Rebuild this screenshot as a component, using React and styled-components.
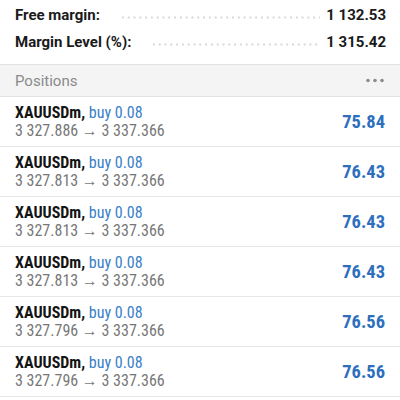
import React from "react";
import styled, { createGlobalStyle } from "styled-components";

const Global = createGlobalStyle`
  html, body { margin: 0; padding: 0; background: #ffffff; }
  body { font-family: Roboto, "Noto Sans", sans-serif; }
`;

const Page = styled.div`
  width: 400px;
  height: 400px;
  overflow: hidden;
  background: #fff;
`;

const Summary = styled.div`
  padding: 1px 14px 9px 15px;
  display: flex;
  flex-direction: column;
`;

const SummaryRow = styled.div`
  display: flex;
  align-items: center;
  height: 27px;
  font-size: 15px;
  font-weight: 700;
  color: #1a1a1a;
`;

const Label = styled.span`
  white-space: nowrap;
`;

const Leader = styled.span`
  flex: 1;
  height: 3px;
  margin: 6px 6px 0 20px;
  background-image: radial-gradient(circle, #d6d6d6 0.9px, transparent 1.3px);
  background-size: 5.8px 3px;
  background-repeat: repeat-x;
`;

const Amount = styled.span`
  white-space: nowrap;
`;

const SectionHeader = styled.div`
  display: flex;
  align-items: center;
  justify-content: space-between;
  height: 31px;
  padding: 0 16px 0 15px;
  background: #f4f4f4;
  border-top: 1px solid #e2e2e2;
  border-bottom: 1px solid #e2e2e2;
  font-size: 15px;
  color: #8a8a8a;
`;

const Position = styled.div`
  display: flex;
  align-items: center;
  justify-content: space-between;
  padding: 7px 15px 6px 15px;
  border-bottom: 1px solid #e6e6e6;
  font-family: "Roboto Condensed", Roboto, sans-serif;
`;

const Info = styled.div`
  display: flex;
  flex-direction: column;
  font-size: 16px;
  line-height: 18px;
`;

const Symbol = styled.span`
  font-weight: 700;
  color: #141414;
`;

const Side = styled.span`
  color: #3a80c8;
`;

const Prices = styled.span`
  color: #777777;
`;

const Profit = styled.span`
  font-size: 18.5px;
  font-weight: 700;
  color: #2d6fbe;
`;

const summary = [
  ["Free margin:", "1 132.53"],
  ["Margin Level (%):", "1 315.42"],
];

const positions = [
  ["3 327.886", "75.84"],
  ["3 327.813", "76.43"],
  ["3 327.813", "76.43"],
  ["3 327.813", "76.43"],
  ["3 327.796", "76.56"],
  ["3 327.796", "76.56"],
];

const MoreIcon = () => (
  <svg width="18" height="5" viewBox="0 0 18 5">
    <circle cx="2" cy="2.5" r="1.8" fill="#8c8c8c" />
    <circle cx="9" cy="2.5" r="1.8" fill="#8c8c8c" />
    <circle cx="16" cy="2.5" r="1.8" fill="#8c8c8c" />
  </svg>
);

export default function App() {
  return (
    <Page>
      <Global />
      <Summary>
        {summary.map(([l, v]) => (
          <SummaryRow key={l}>
            <Label>{l}</Label>
            <Leader />
            <Amount>{v}</Amount>
          </SummaryRow>
        ))}
      </Summary>
      <SectionHeader>
        <span>Positions</span>
        <MoreIcon />
      </SectionHeader>
      {positions.map(([open, profit], i) => (
        <Position key={i}>
          <Info>
            <span>
              <Symbol>XAUUSDm,</Symbol> <Side>buy 0.08</Side>
            </span>
            <Prices>{open} → 3 337.366</Prices>
          </Info>
          <Profit>{profit}</Profit>
        </Position>
      ))}
    </Page>
  );
}
